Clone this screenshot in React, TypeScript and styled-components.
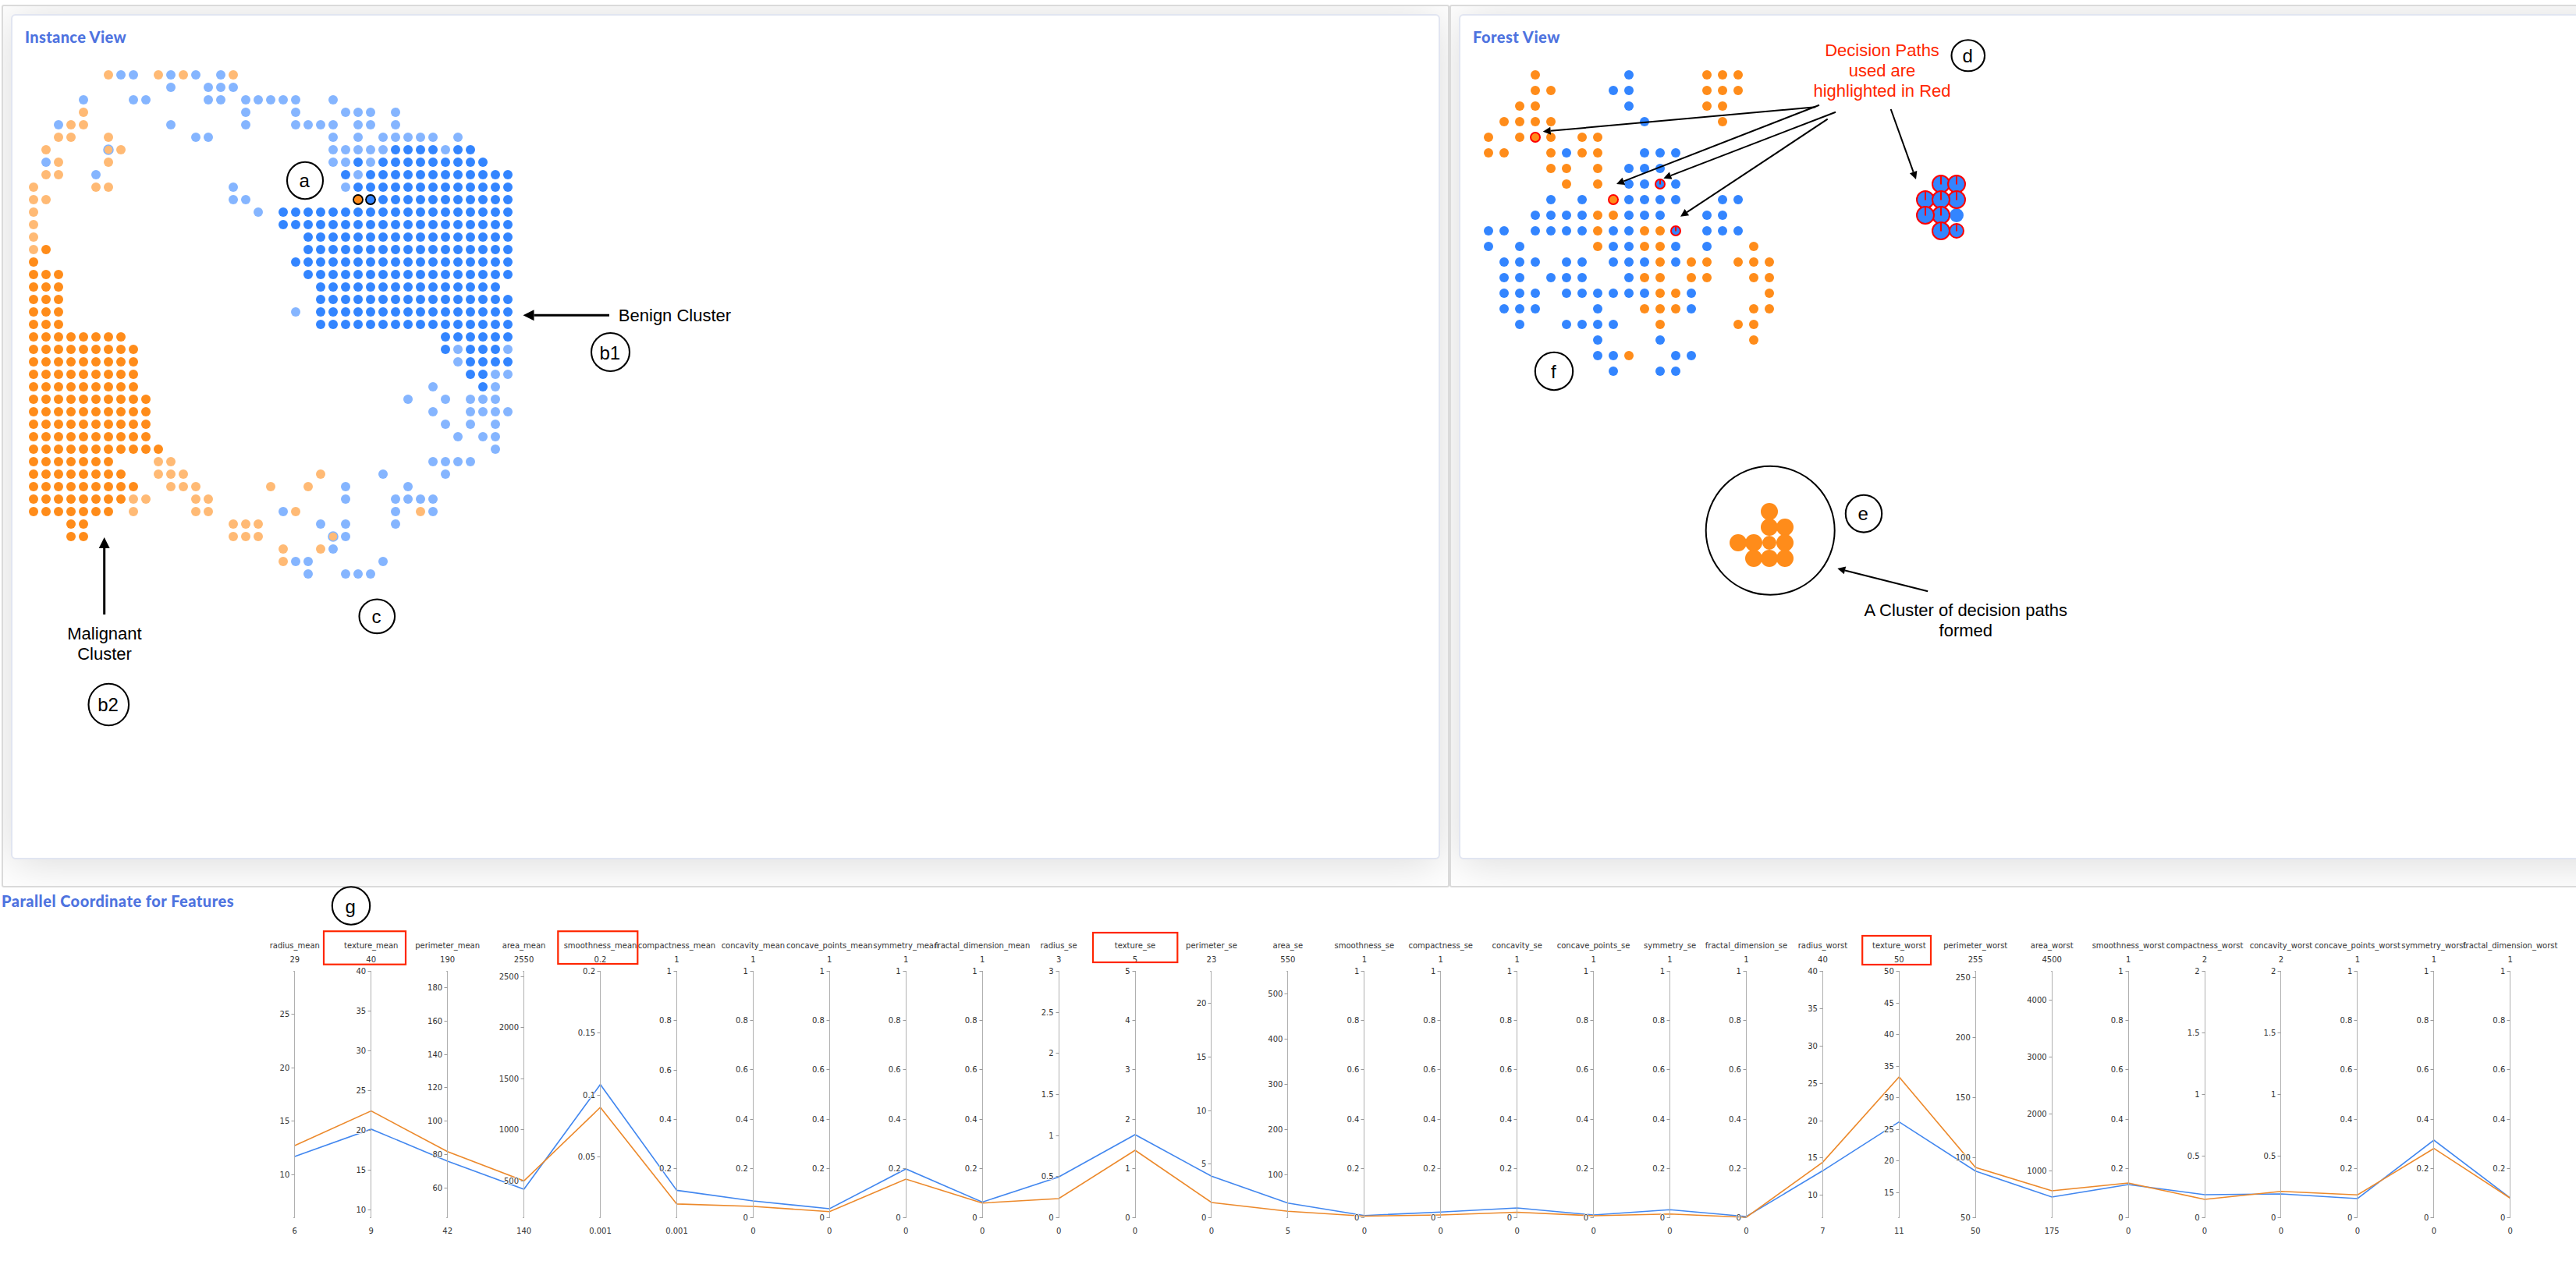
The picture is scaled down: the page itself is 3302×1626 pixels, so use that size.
import React from 'react';
import styled, { createGlobalStyle } from 'styled-components';

const GlobalStyle = createGlobalStyle`
  html, body {
    margin: 0;
    background: #fff;
    overflow: hidden;
  }
  * { box-sizing: border-box; }
`;

const Page = styled.main`
  width: 3302px;
  height: 1626px;
  overflow: hidden;
  display: flex;
  flex-direction: column;
  background: #fff;
`;

const Views = styled.div`
  display: grid;
  grid-template-columns: 1856px 1856px;
  height: 1138px;
  padding: 6px 0 0 2px;
  flex: none;
`;

const Cell = styled.section`
  border: 2px solid #dadada;
  border-radius: 3px;
  padding: 10px;
  padding-bottom: 34px;
  overflow: hidden;
  display: flex;
`;

const Card = styled.div`
  flex: 1;
  display: grid;
  background: #fff;
  border: 2px solid #e1e5f1;
  border-radius: 6px;
  box-shadow: 0 5px 56px rgba(0, 0, 0, 0.15);
`;

const Heading = styled.h6<{ $top: number; $left: number; $track?: number }>`
  grid-area: 1 / 1;
  margin: 0;
  padding: ${(p) => p.$top}px 0 0 ${(p) => p.$left}px;
  font: 900 20px/24px Lato, 'Open Sans', sans-serif;
  letter-spacing: ${(p) => p.$track ?? 0}px;
  color: #4e73df;
`;

const Canvas = styled.svg`
  grid-area: 1 / 1;
  display: block;
  overflow: visible;
`;

const Features = styled.section`
  display: grid;
  height: 488px;
  flex: none;
`;

const Note = styled.text<{ $color?: string; $size?: number }>`
  font-family: 'Liberation Sans', Arial, sans-serif;
  font-size: ${(p) => p.$size ?? 22}px;
  fill: ${(p) => p.$color ?? '#000'};
  text-anchor: middle;
`;

const AxisText = styled.text<{ $anchor?: string }>`
  font-family: 'DejaVu Sans', Verdana, sans-serif;
  font-size: 10px;
  fill: #333;
  text-anchor: ${(p) => p.$anchor ?? 'middle'};
`;

const TickText = styled(AxisText)`
  stroke: #fff;
  stroke-width: 1.5px;
  stroke-linejoin: round;
  paint-order: stroke;
`;

const BLUE = '#3385ff';
const ORANGE = '#ff8c1a';
const LIGHT_BLUE = '#85b5ff';
const LIGHT_ORANGE = '#ffba75';
const RED = '#ff0000';
const MARK = '#ff2600';

const COLORS: Record<string, string> = { B: BLUE, O: ORANGE, b: LIGHT_BLUE, o: LIGHT_ORANGE };

/* One string per grid row: a colour key followed by a column or a column range. */
const INSTANCES = [
  'o6 b7-8 o10 b11 o12 b13 b15 o16',
  'b11 b14-16',
  'b4 b8-9 b14-15 b17-21 b24',
  'o4 b17 b21 b25-27 b29',
  'b2 o3-4 b11 b17 b21-24 b26-27 b29',
  'o2-3 o6 b13-14 b24 b26 b28-32 b34',
  'o1 o7 b24-28 B29-32 b33 B34-35',
  'b1 o2 o6 b24-25 B26 b27 B28-36',
  'o1-2 b5 B25 b26 B27-38',
  'o0 o5-6 b16 b25 B26-38',
  'o0-1 b16-17 B28-38',
  'o0 b18 B20-38',
  'o0 B20-38',
  'o0 B22-38',
  'o0 O1 B22-38',
  'O0 B21-38',
  'O0-2 B22-38',
  'O0-2 B23-37',
  'O0-2 B23-38',
  'O0-2 b21 B23-38',
  'O0-2 B23-38',
  'O0-7 B33-38',
  'O0-8 B33 b34 B35-37 b38',
  'O0-8 b34 B35-38',
  'O0-8 B35-36 b37-38',
  'O0-8 b32 B36 b37',
  'O0-9 b30 b33 b35-37',
  'O0-9 b32 b35-38',
  'O0-9 b33 b35 b37',
  'O0-9 b34 b36-37',
  'O0-10 b37',
  'O0-6 o10-11 b32-35',
  'O0-7 o10-12 o23 b28 b33',
  'O0-8 o11-13 o19 o22 b25 b30',
  'O0-7 o8-9 o13-14 b25 b29-32',
  'O0-6 o8 o13-14 b20 o21 b29 o31 b32',
  'O3-4 o16-18 b23 b25 b29',
  'O3-4 o16-18 b25',
  'o20 o23 b24',
  'o20 b21-22 b28',
  'b22 b25-27',
];

const TREES = [
  'O3 B9 O14-16',
  'O3-4 B8-9 O14-16',
  'O2-3 B9 O14-15',
  'O1-4 B10 O15',
  'O0 O2 O4 O6-7',
  'O0-1 O4 B5 O6-7 B10-12',
  'O4-5 O7 B9-11',
  'O5 O7 B9-10 B12',
  'B4 B6 B9-12 B15-16',
  'B3-6 O7-8 B9-11 B14-15',
  'B0-1 B3-6 O7 B8-9 O10-11 B14-16',
  'B0 B2 O7 B8-9 O10-11 B12 B14 O17',
  'B1-3 B5-6 B8-10 O11 B12 O13-14 O16-18',
  'B1-2 B4-6 B9 O10-11 O13-14 O17-18',
  'B1-3 B5-10 O11-12 B13 O18',
  'B1-3 B7 O10-12 B13 O17-18',
  'B2 B5-8 O11 O16-17',
  'B7 B11 O17',
  'B7-8 O9 B12-13',
  'B8 B11-12',
];

function Dots({ rows, x, y, pitch }: { rows: string[]; x: number; y: number; pitch: number }) {
  const dots: React.ReactNode[] = [];
  rows.forEach((row, r) => {
    row.split(' ').forEach((run) => {
      const [from, to = from] = run.slice(1).split('-').map(Number);
      for (let c = from; c <= to; c += 1) {
        dots.push(
          <circle key={`${r}-${c}`} cx={x + c * pitch} cy={y + r * pitch} r={6} fill={COLORS[run[0]]} />,
        );
      }
    });
  });
  return <g>{dots}</g>;
}

interface RingProps { x: number; y: number; r?: number; fill: string; stroke: string; hand?: boolean; w?: number }
function Ring({ x, y, r = 6, fill, stroke, hand, w = 2 }: RingProps) {
  return (
    <g fill={fill} stroke={stroke} strokeWidth={w}>
      <circle cx={x} cy={y} r={r} />
      {hand && <path d={`M${x} ${y + 0.5}V${y - r}`} />}
    </g>
  );
}

interface ArrowProps { from: [number, number]; to: [number, number]; width?: number; head?: number }
function Arrow({ from, to, width = 2, head = 10 }: ArrowProps) {
  const dx = to[0] - from[0];
  const dy = to[1] - from[1];
  const len = Math.hypot(dx, dy);
  const ux = dx / len;
  const uy = dy / len;
  const bx = to[0] - ux * head;
  const by = to[1] - uy * head;
  const h = head / 2;
  return (
    <g>
      <path d={`M${from[0]} ${from[1]}L${bx} ${by}`} stroke="#000" strokeWidth={width} />
      <path d={`M${to[0]} ${to[1]}L${bx - uy * h} ${by + ux * h}L${bx + uy * h} ${by - ux * h}Z`} />
    </g>
  );
}

interface BadgeProps { x: number; y: number; rx: number; ry?: number; base: number; children: string }
function Badge({ x, y, rx, ry = rx, base, children }: BadgeProps) {
  return (
    <g>
      <ellipse cx={x} cy={y} rx={rx} ry={ry} fill="none" stroke="#000" strokeWidth={2.1} />
      <Note x={x - 0.7} y={base} $size={24}>{children}</Note>
    </g>
  );
}

type Feature = [name: string, min: number, max: number, start: number, step: number];

const FEATURES: Feature[] = [
  ['radius_mean', 6, 29, 10, 5],
  ['texture_mean', 9, 40, 10, 5],
  ['perimeter_mean', 42, 190, 60, 20],
  ['area_mean', 140, 2550, 500, 500],
  ['smoothness_mean', 0.001, 0.2, 0.05, 0.05],
  ['compactness_mean', 0.001, 1, 0.2, 0.2],
  ['concavity_mean', 0, 1, 0, 0.2],
  ['concave_points_mean', 0, 1, 0, 0.2],
  ['symmetry_mean', 0, 1, 0, 0.2],
  ['fractal_dimension_mean', 0, 1, 0, 0.2],
  ['radius_se', 0, 3, 0, 0.5],
  ['texture_se', 0, 5, 0, 1],
  ['perimeter_se', 0, 23, 0, 5],
  ['area_se', 5, 550, 100, 100],
  ['smoothness_se', 0, 1, 0, 0.2],
  ['compactness_se', 0, 1, 0, 0.2],
  ['concavity_se', 0, 1, 0, 0.2],
  ['concave_points_se', 0, 1, 0, 0.2],
  ['symmetry_se', 0, 1, 0, 0.2],
  ['fractal_dimension_se', 0, 1, 0, 0.2],
  ['radius_worst', 7, 40, 10, 5],
  ['texture_worst', 11, 50, 15, 5],
  ['perimeter_worst', 50, 255, 50, 50],
  ['area_worst', 175, 4500, 1000, 1000],
  ['smoothness_worst', 0, 1, 0, 0.2],
  ['compactness_worst', 0, 2, 0, 0.5],
  ['concavity_worst', 0, 2, 0, 0.5],
  ['concave_points_worst', 0, 1, 0, 0.2],
  ['symmetry_worst', 0, 1, 0, 0.2],
  ['fractal_dimension_worst', 0, 1, 0, 0.2],
];

const BENIGN_LINE = [
  1482.9, 1447.9, 1488.9, 1525, 1390.7, 1526.4, 1540, 1550, 1499, 1541.5, 1509.3, 1455, 1508.3, 1542.7, 1558.7,
  1554.3, 1549, 1558, 1551.3, 1560, 1501.3, 1438.7, 1501.7, 1535, 1519, 1532, 1531, 1537, 1462, 1536.3,
];
const MALIGNANT_LINE = [
  1468.9, 1424.6, 1476.8, 1514.3, 1420, 1543.9, 1547, 1553.7, 1512, 1542.7, 1537, 1475, 1542, 1553.3, 1559.5,
  1558, 1554.5, 1559, 1556.8, 1561, 1490.3, 1381, 1497, 1527, 1517, 1538, 1527.7, 1532.3, 1472.7, 1536.5,
];

const AXIS_TOP = 1245.5;
const AXIS_BOTTOM = 1561.5;
const axisX = (i: number) => 377.8 + i * 97.93;
const points = (line: number[]) => line.map((y, i) => `${axisX(i)},${y}`).join(' ');

function Axis({ feature, x }: { feature: Feature; x: number }) {
  const [name, min, max, start, step] = feature;
  const ticks: number[] = [];
  for (let v = start; v <= max + step * 0.001; v += step) ticks.push(Number(v.toFixed(3)));
  const line = Math.floor(x) + 0.5;
  return (
    <g>
      <path d={`M${line} ${AXIS_TOP}V${AXIS_BOTTOM}M${line - 1.5} ${AXIS_TOP}h2M${line - 1.5} ${AXIS_BOTTOM}h2`} stroke="#b0b0b0" fill="none" />
      {ticks.map((t) => {
        const y = AXIS_BOTTOM - ((t - min) / (max - min)) * (AXIS_BOTTOM - AXIS_TOP);
        return (
          <g key={t}>
            <path d={`M${line - 4} ${Math.floor(y) + 0.5}h4`} stroke="#999" />
            <TickText $anchor="end" x={x - 6.5} y={y + 3.5}>{t}</TickText>
          </g>
        );
      })}
      <AxisText x={x} y={1216}>{name}</AxisText>
      <AxisText x={x} y={1234}>{max}</AxisText>
      <AxisText x={x} y={1582}>{min}</AxisText>
    </g>
  );
}

const HIGHLIGHTS: [number, number, number, number][] = [
  [415, 1194.2, 105, 42.5],
  [715.3, 1194.2, 102, 41.8],
  [1401, 1196, 108.3, 38],
  [2387.2, 1200, 87.8, 37],
];

const RED_CLUSTER: [number, number, number][] = [
  [2488, 236, 11], [2508, 236, 11], [2468, 256, 11], [2508, 256, 11], [2488, 256, 11],
  [2488, 276, 11], [2468, 276, 11], [2508, 296, 9], [2488, 296, 11],
];

const ORANGE_CLUSTER: [number, number, number][] = [
  [2268, 656, 11], [2268, 676, 11], [2288, 676, 11], [2228, 696, 11], [2248, 696, 11],
  [2268, 696, 9], [2288, 696, 11], [2248, 716, 11], [2268, 716, 11], [2288, 716, 11],
];

function InstanceView() {
  return (
    <Cell>
      <Card>
        <Heading $top={15} $left={16} $track={0.35}>Instance View</Heading>
        <Canvas viewBox="16 20 1828 1080" width={1828} height={1080}>
          <Dots rows={INSTANCES} x={43} y={96} pitch={16} />
          <Ring x={139} y={192} fill={LIGHT_ORANGE} stroke={LIGHT_BLUE} w={1.6} />
          <Ring x={427} y={688} fill={LIGHT_ORANGE} stroke={LIGHT_BLUE} w={1.6} />
          <Ring x={459} y={256} fill={ORANGE} stroke="#000" w={1.8} />
          <Ring x={475} y={256} fill={BLUE} stroke="#000" w={1.8} />
          <Arrow from={[781, 404.3]} to={[670.5, 404.3]} width={3} head={14} />
          <Arrow from={[133.7, 788]} to={[133.7, 689]} width={3} head={14} />
          <Note x={865} y={412}>Benign Cluster</Note>
          <Note x={134} y={820.3}>Malignant</Note>
          <Note x={134} y={846}>Cluster</Note>
          <Badge x={391} y={231.5} rx={23} ry={23.7} base={240.3}>a</Badge>
          <Badge x={782.5} y={451.5} rx={24.5} base={460.5}>b1</Badge>
          <Badge x={139.3} y={903.5} rx={25.8} ry={26.7} base={912}>b2</Badge>
          <Badge x={483.3} y={790.3} rx={22.8} ry={21.8} base={799.3}>c</Badge>
        </Canvas>
      </Card>
    </Cell>
  );
}

function ForestView() {
  return (
    <Cell>
      <Card>
        <Heading $top={15} $left={16} $track={0.5}>Forest View</Heading>
        <Canvas viewBox="1872 20 1828 1080" width={1828} height={1080}>
          <Dots rows={TREES} x={1908} y={96} pitch={20} />
          <Ring x={1968} y={176} fill={ORANGE} stroke={RED} />
          <Ring x={2068} y={256} fill={ORANGE} stroke={RED} />
          <Ring x={2128} y={236} fill={BLUE} stroke={RED} hand />
          <Ring x={2148} y={296} fill={BLUE} stroke={RED} hand />
          <circle cx={2508} cy={276} r={9} fill={BLUE} />
          {RED_CLUSTER.map(([x, y, r]) => (
            <Ring key={`${x}-${y}`} x={x} y={y} r={r} fill={BLUE} stroke={RED} hand />
          ))}
          {ORANGE_CLUSTER.map(([x, y, r]) => (
            <circle key={`${x}-${y}`} cx={x} cy={y} r={r} fill={ORANGE} />
          ))}
          <circle cx={2269.2} cy={680.3} r={82.5} fill="none" stroke="#000" strokeWidth={2} />
          <Arrow from={[2327.3, 137.3]} to={[1977.7, 168.7]} />
          <Arrow from={[2332, 134.7]} to={[2072, 236]} />
          <Arrow from={[2353, 143.7]} to={[2132.3, 228.7]} />
          <Arrow from={[2342.7, 152.7]} to={[2154, 277.7]} />
          <Arrow from={[2423.7, 140]} to={[2456, 230]} />
          <Arrow from={[2471.2, 758.3]} to={[2355.3, 729]} />
          <Note x={2412.5} y={71.5} $color={MARK}>Decision Paths</Note>
          <Note x={2412.5} y={97.6} $color={MARK}>used are</Note>
          <Note x={2412.5} y={123.7} $color={MARK}>highlighted in Red</Note>
          <Note x={2519.8} y={790}>A Cluster of decision paths</Note>
          <Note x={2519.8} y={816}>formed</Note>
          <Badge x={2522.8} y={71.3} rx={21.3} ry={20} base={80}>d</Badge>
          <Badge x={2389} y={658.7} rx={23.2} ry={23.9} base={667.3}>e</Badge>
          <Badge x={1992} y={476} rx={24.2} base={484.7}>f</Badge>
        </Canvas>
      </Card>
    </Cell>
  );
}

function ParallelCoordinates() {
  return (
    <Features>
      <Heading $top={5} $left={2} $track={0.48}>Parallel Coordinate for Features</Heading>
      <Canvas viewBox="0 1138 3302 488" width={3302} height={488}>
        <polyline points={points(BENIGN_LINE)} fill="none" stroke="#4287ef" strokeWidth={1.6} />
        <polyline points={points(MALIGNANT_LINE)} fill="none" stroke="#ec892b" strokeWidth={1.6} />
        {FEATURES.map((f, i) => (
          <Axis key={f[0]} feature={f} x={axisX(i)} />
        ))}
        {HIGHLIGHTS.map(([x, y, w, h]) => (
          <rect key={x} x={x} y={y} width={w} height={h} fill="none" stroke={MARK} strokeWidth={2.2} />
        ))}
        <Badge x={450} y={1161.5} rx={24.2} base={1170.5}>g</Badge>
      </Canvas>
    </Features>
  );
}

export default function App() {
  return (
    <Page>
      <GlobalStyle />
      <Views>
        <InstanceView />
        <ForestView />
      </Views>
      <ParallelCoordinates />
    </Page>
  );
}
